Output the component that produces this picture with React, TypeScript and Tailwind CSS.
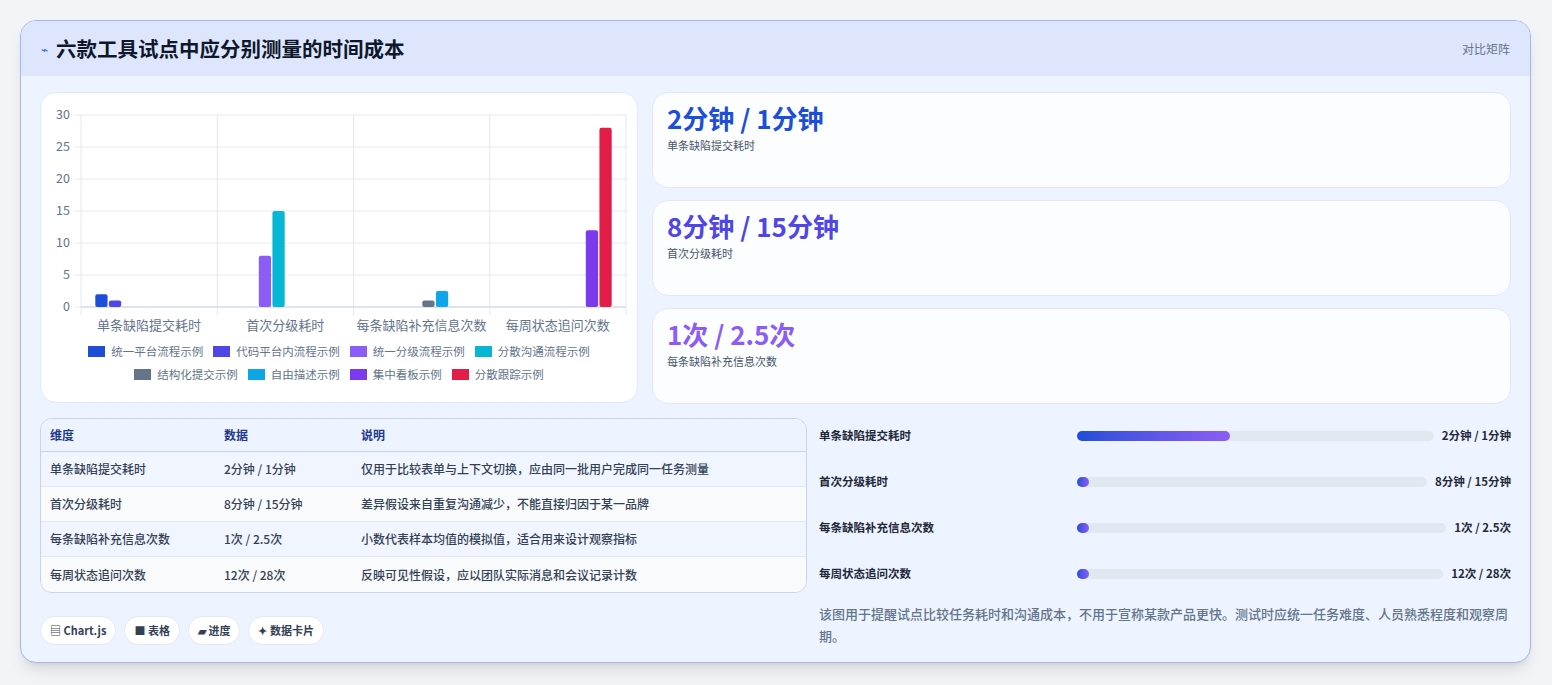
import React from "react";

const cats = ["单条缺陷提交耗时", "首次分级耗时", "每条缺陷补充信息次数", "每周状态追问次数"];
const ds = [
  { n: "统一平台流程示例", c: "#1d4ed8", cat: 0, v: 2 },
  { n: "代码平台内流程示例", c: "#4f46e5", cat: 0, v: 1 },
  { n: "统一分级流程示例", c: "#8b5cf6", cat: 1, v: 8 },
  { n: "分散沟通流程示例", c: "#06b6d4", cat: 1, v: 15 },
  { n: "结构化提交示例", c: "#64748b", cat: 2, v: 1 },
  { n: "自由描述示例", c: "#0ea5e9", cat: 2, v: 2.5 },
  { n: "集中看板示例", c: "#7c3aed", cat: 3, v: 12 },
  { n: "分散跟踪示例", c: "#e11d48", cat: 3, v: 28 },
];

function Chart() {
  const x0 = 40, x1 = 585, yTop = 22, yBot = 214;
  const cw = (x1 - x0) / 4;
  const slot = (cw * 0.8) / 8;
  const sc = (yBot - yTop) / 30;
  return (
    <svg width="597" height="310" className="block" style={{ fontFamily: "'Noto Sans CJK SC', sans-serif" }}>
      {[0, 5, 10, 15, 20, 25, 30].map((t) => (
        <g key={t}>
          <line x1={x0 - 6} x2={x1} y1={yBot - t * sc} y2={yBot - t * sc} stroke="#e2e8f0" />
          <text x={29} y={yBot - t * sc + 4} textAnchor="end" fontSize="12.5" fill="#64748b">{t}</text>
        </g>
      ))}
      {[0, 1, 2, 3, 4].map((i) => (
        <line key={i} x1={x0 + i * cw} x2={x0 + i * cw} y1={yTop} y2={yBot + 8} stroke="#e2e8f0" />
      ))}
      <line x1={x0} x2={x1} y1={yBot} y2={yBot} stroke="#cbd5e1" />
      {ds.map((d, i) => {
        const cx = x0 + d.cat * cw + cw * 0.1 + slot * (i + 0.5);
        const h = d.v * sc;
        return <rect key={i} x={cx - slot * 0.45} y={yBot - h} width={slot * 0.9} height={h} rx="2" fill={d.c} />;
      })}
      {cats.map((c, i) => (
        <text key={c} x={x0 + i * cw + cw / 2} y={237} textAnchor="middle" fontSize="13" fill="#64748b">{c}</text>
      ))}
    </svg>
  );
}

const stats = [
  { v: "2分钟 / 1分钟", l: "单条缺陷提交耗时", c: "text-[#1d4ed8]" },
  { v: "8分钟 / 15分钟", l: "首次分级耗时", c: "text-[#4f46e5]" },
  { v: "1次 / 2.5次", l: "每条缺陷补充信息次数", c: "text-[#8b5cf6]" },
];

const rows = [
  ["单条缺陷提交耗时", "2分钟 / 1分钟", "仅用于比较表单与上下文切换，应由同一批用户完成同一任务测量"],
  ["首次分级耗时", "8分钟 / 15分钟", "差异假设来自重复沟通减少，不能直接归因于某一品牌"],
  ["每条缺陷补充信息次数", "1次 / 2.5次", "小数代表样本均值的模拟值，适合用来设计观察指标"],
  ["每周状态追问次数", "12次 / 28次", "反映可见性假设，应以团队实际消息和会议记录计数"],
];

const bars = [
  { l: "单条缺陷提交耗时", v: "2分钟 / 1分钟", p: 43 },
  { l: "首次分级耗时", v: "8分钟 / 15分钟", p: 0 },
  { l: "每条缺陷补充信息次数", v: "1次 / 2.5次", p: 0 },
  { l: "每周状态追问次数", v: "12次 / 28次", p: 0 },
];

export default function App() {
  return (
    <div className="w-[1552px] h-[685px] bg-[#f3f4f6] pt-5 pl-5" style={{ fontFamily: "'Noto Sans CJK SC', 'Noto Sans', sans-serif" }}>
      <div className="w-[1511px] h-[643px] rounded-2xl border border-[#a5b4fc] bg-[#eef4ff] overflow-hidden shadow-lg">
        <div className="h-[55px] bg-[#dde6fd] flex items-center justify-between px-5">
          <div className="flex items-center gap-2">
            <span className="text-[#2563eb] text-[12px]">⌁</span>
            <span className="text-[20.5px] font-bold text-[#0f172a]">六款工具试点中应分别测量的时间成本</span>
          </div>
          <span className="text-[12px] text-[#64748b]">对比矩阵</span>
        </div>
        <div className="px-[19px] pt-[16px]">
          <div className="flex gap-[14px]">
            <div className="w-[598px] h-[311px] bg-white rounded-2xl border border-[#e0e7ff]">
              <Chart />
              <div className="-mt-[60px] flex flex-col items-center gap-[6px] text-[11.5px] text-[#64748b]">
                <div className="flex gap-[10px]">
                  {ds.slice(0, 4).map((d) => (
                    <span key={d.n} className="flex items-center gap-[6px]"><span className="w-[17px] h-[11px]" style={{ background: d.c }} />{d.n}</span>
                  ))}
                </div>
                <div className="flex gap-[10px]">
                  {ds.slice(4).map((d) => (
                    <span key={d.n} className="flex items-center gap-[6px]"><span className="w-[17px] h-[11px]" style={{ background: d.c }} />{d.n}</span>
                  ))}
                </div>
              </div>
            </div>
            <div className="flex-1 flex flex-col gap-3">
              {stats.map((s) => (
                <div key={s.l} className="h-[96px] bg-white/80 rounded-2xl border border-[#e0e7ff] px-[14px] pt-[6px]">
                  <div className={`text-[26px] font-bold leading-[38px] ${s.c}`}>{s.v}</div>
                  <div className="text-[11px] text-[#475569]">{s.l}</div>
                </div>
              ))}
            </div>
          </div>
          <div className="flex gap-3 mt-[14px]">
            <div className="w-[767px]">
              <div className="rounded-xl border border-[#cbd5e1] overflow-hidden text-[12px] font-medium">
                <div className="flex h-[33px] items-center bg-[#eef4ff] border-b border-[#cbd5e1] font-bold text-[#1e3a8a]">
                  <div className="w-[183px] pl-[9px]">维度</div><div className="w-[137px]">数据</div><div>说明</div>
                </div>
                {rows.map((r, i) => (
                  <div key={i} className={`flex h-[35px] items-center text-[#334155] ${i < 3 ? "border-b border-[#e2e8f0]" : ""} ${i % 2 ? "bg-[#f8fafc]" : "bg-[#f1f5ff]"}`}>
                    <div className="w-[183px] pl-[9px]">{r[0]}</div><div className="w-[137px]">{r[1]}</div><div>{r[2]}</div>
                  </div>
                ))}
              </div>
              <div className="flex gap-2 mt-[23px] text-[11px] text-[#334155] font-bold">
                {["▤ Chart.js", "■ 表格", "▰ 进度", "✦ 数据卡片"].map((p) => (
                  <span key={p} className="h-[29px] px-[9px] flex items-center rounded-full bg-white border border-[#e2e8f0]">{p}</span>
                ))}
              </div>
            </div>
            <div className="flex-1 -mt-[5px]">
              {bars.map((b, i) => (
                <div key={i} className="flex items-center h-[46px] text-[11.5px] font-bold text-[#1e293b]">
                  <div className="w-[258px]">{b.l}</div>
                  <div className="flex-1 h-[10px] rounded-full bg-[#e2e8f0] mr-2">
                    <div className="h-full rounded-full bg-gradient-to-r from-[#1d4ed8] to-[#8b5cf6]" style={{ width: b.p ? `${b.p}%` : "12px" }} />
                  </div>
                  <div>{b.v}</div>
                </div>
              ))}
              <p className="mt-[6px] text-[13px] font-medium leading-[22px] text-[#64748b]">该图用于提醒试点比较任务耗时和沟通成本，不用于宣称某款产品更快。测试时应统一任务难度、人员熟悉程度和观察周期。</p>
            </div>
          </div>
        </div>
      </div>
    </div>
  );
}
